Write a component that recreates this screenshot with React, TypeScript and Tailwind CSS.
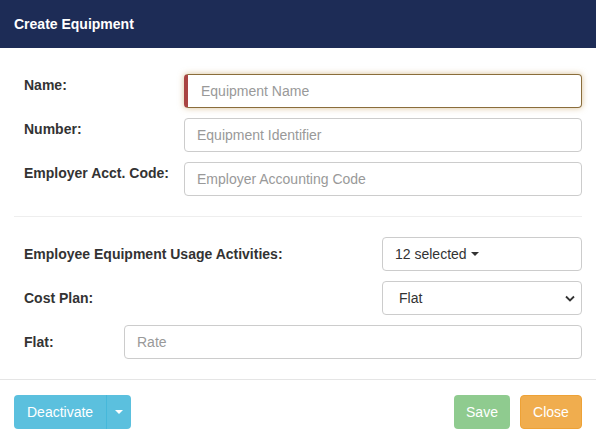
import React from "react";

const font = { fontFamily: '"Liberation Sans", Arial, Helvetica, sans-serif' };

function Caret() {
  return (
    <svg width="8" height="4" viewBox="0 0 8 4" className="inline-block">
      <path d="M0 0 L8 0 L4 4 Z" fill="currentColor" />
    </svg>
  );
}

export default function App() {
  return (
    <div className="w-[596px] h-[441px] bg-white flex flex-col text-[#333]" style={font}>
      <div className="h-[48px] bg-[#1d2c56] flex items-center px-[14px] shrink-0">
        <span className="text-white font-bold text-[14px]">Create Equipment</span>
      </div>
      <div className="flex flex-col px-[14px] pt-[26px]">
        <div className="flex flex-col gap-[10px] pl-[10px]">
          <div className="flex items-start">
            <label className="w-[160px] font-bold text-[14px] pt-[2px] leading-[18px]">Name:</label>
            <div className="flex-1 h-[34px] rounded-[4px] border border-[#8a6d3b] border-l-[4px] border-l-[#a94442] shadow-[0_0_6px_rgba(192,152,83,0.6)] flex items-center pl-[13px] text-[14px] text-[#999]">
              Equipment Name
            </div>
          </div>
          <div className="flex items-start">
            <label className="w-[160px] font-bold text-[14px] pt-[2px] leading-[18px]">Number:</label>
            <div className="flex-1 h-[34px] rounded-[4px] border border-[#ccc] flex items-center pl-[12px] text-[14px] text-[#999]">
              Equipment Identifier
            </div>
          </div>
          <div className="flex items-start">
            <label className="w-[160px] font-bold text-[14px] pt-[2px] leading-[18px]">Employer Acct. Code:</label>
            <div className="flex-1 h-[34px] rounded-[4px] border border-[#ccc] flex items-center pl-[12px] text-[14px] text-[#999]">
              Employer Accounting Code
            </div>
          </div>
        </div>
        <div className="h-px bg-[#eee] mt-[20px] mb-[20px]" />
        <div className="flex flex-col gap-[10px] pl-[10px]">
          <div className="flex items-center">
            <label className="flex-1 font-bold text-[14px] leading-[18px]">Employee Equipment Usage Activities:</label>
            <div className="w-[200px] h-[34px] rounded-[4px] border border-[#ccc] flex items-center gap-[4px] pl-[12px] text-[14px] text-[#333]">
              12 selected <Caret />
            </div>
          </div>
          <div className="flex items-center">
            <label className="flex-1 font-bold text-[14px] leading-[18px]">Cost Plan:</label>
            <div className="w-[200px] h-[34px] rounded-[4px] border border-[#ccc] flex items-center justify-between pl-[16px] pr-[6px] text-[14px] text-[#333]">
              <span>Flat</span>
              <svg width="10" height="7" viewBox="0 0 10 7">
                <path d="M1 1.5 L5 5.5 L9 1.5" stroke="#333" strokeWidth="1.8" fill="none" />
              </svg>
            </div>
          </div>
          <div className="flex items-center">
            <label className="w-[100px] font-bold text-[14px] leading-[18px]">Flat:</label>
            <div className="flex-1 h-[34px] rounded-[4px] border border-[#ccc] flex items-center pl-[12px] text-[14px] text-[#999]">
              Rate
            </div>
          </div>
        </div>
      </div>
      <div className="h-px bg-[#e5e5e5] mt-[20px]" />
      <div className="flex items-center justify-between px-[14px] pt-[15px]">
        <div className="flex h-[34px] rounded-[4px] bg-[#5bc0de] text-white text-[14px] overflow-hidden">
          <div className="px-[13px] flex items-center">Deactivate</div>
          <div className="w-[25px] border-l border-[#46b8da] flex items-center justify-center">
            <Caret />
          </div>
        </div>
        <div className="flex gap-[10px]">
          <div className="h-[34px] w-[56px] rounded-[4px] bg-[#8fcb8f] text-white text-[14px] flex items-center justify-center">
            Save
          </div>
          <div className="h-[34px] w-[62px] rounded-[4px] bg-[#f0ad4e] border border-[#eea236] text-white text-[14px] flex items-center justify-center">
            Close
          </div>
        </div>
      </div>
    </div>
  );
}
